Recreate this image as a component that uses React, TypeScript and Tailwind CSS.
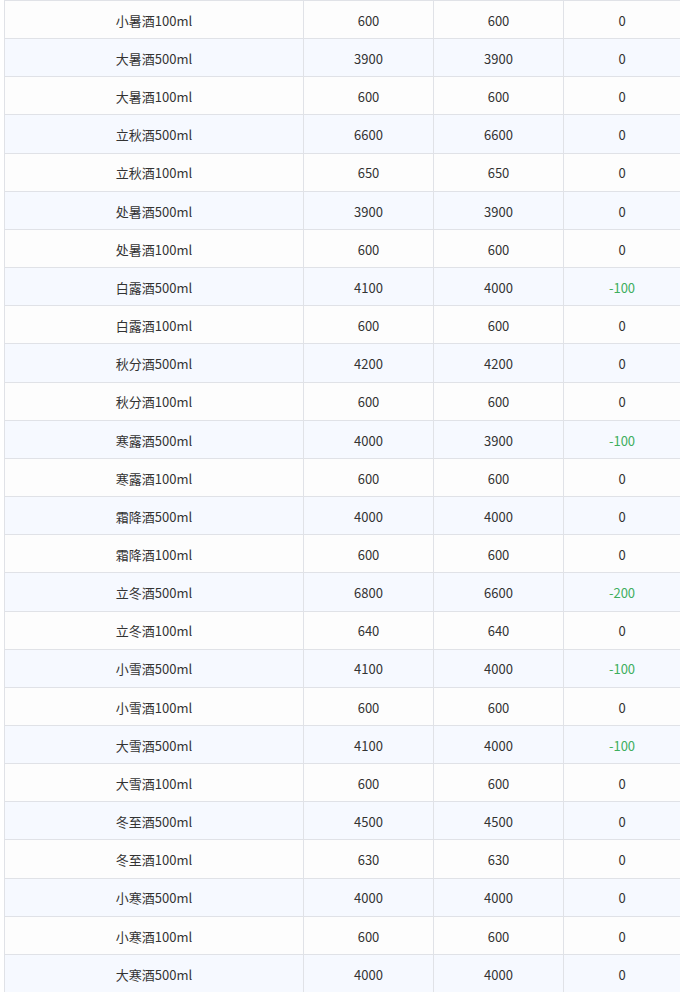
const rows: [string, string, string, string][] = [
  ['小暑酒100ml', '600', '600', '0'],
  ['大暑酒500ml', '3900', '3900', '0'],
  ['大暑酒100ml', '600', '600', '0'],
  ['立秋酒500ml', '6600', '6600', '0'],
  ['立秋酒100ml', '650', '650', '0'],
  ['处暑酒500ml', '3900', '3900', '0'],
  ['处暑酒100ml', '600', '600', '0'],
  ['白露酒500ml', '4100', '4000', '-100'],
  ['白露酒100ml', '600', '600', '0'],
  ['秋分酒500ml', '4200', '4200', '0'],
  ['秋分酒100ml', '600', '600', '0'],
  ['寒露酒500ml', '4000', '3900', '-100'],
  ['寒露酒100ml', '600', '600', '0'],
  ['霜降酒500ml', '4000', '4000', '0'],
  ['霜降酒100ml', '600', '600', '0'],
  ['立冬酒500ml', '6800', '6600', '-200'],
  ['立冬酒100ml', '640', '640', '0'],
  ['小雪酒500ml', '4100', '4000', '-100'],
  ['小雪酒100ml', '600', '600', '0'],
  ['大雪酒500ml', '4100', '4000', '-100'],
  ['大雪酒100ml', '600', '600', '0'],
  ['冬至酒500ml', '4500', '4500', '0'],
  ['冬至酒100ml', '630', '630', '0'],
  ['小寒酒500ml', '4000', '4000', '0'],
  ['小寒酒100ml', '600', '600', '0'],
  ['大寒酒500ml', '4000', '4000', '0'],
];

export default function App() {
  return (
    <div
      className="h-[992px] overflow-hidden bg-white pl-1 text-[13px] text-[#333]"
      style={{ fontFamily: '"Microsoft YaHei", "Noto Sans CJK SC", "Noto Sans", sans-serif' }}
    >
      <div className="w-[676px] border-t border-l border-[#e0e2e7]">
        {rows.map((r, i) => (
          <div
            key={i}
            className={`grid h-[38.16px] grid-cols-[298px_130px_130px_1fr] border-b border-[#e0e2e7] ${
              i % 2 === 1 ? 'bg-[#f6f9ff]' : 'bg-[#fdfdfd]'
            }`}
          >
            <div className="flex items-center justify-center pt-[2px]">{r[0]}</div>
            <div className="flex items-center justify-center border-l border-[#e0e2e7] pt-[2px]">{r[1]}</div>
            <div className="flex items-center justify-center border-l border-[#e0e2e7] pt-[2px]">{r[2]}</div>
            <div
              className={`flex items-center justify-center border-l border-[#e0e2e7] pt-[2px] ${
                r[3].startsWith('-') ? 'text-[#3fae5e]' : ''
              }`}
            >
              {r[3]}
            </div>
          </div>
        ))}
      </div>
    </div>
  );
}
